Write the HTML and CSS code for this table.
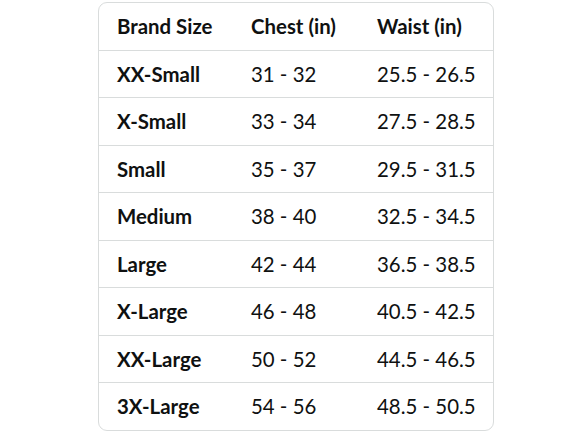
FILE: index.html
```html
<!DOCTYPE html>
<html lang="en">
<head>
<meta charset="utf-8">
<title>Size chart</title>
<link rel="stylesheet" href="styles.css">
</head>
<body>
<div class="page">
  <table class="chart">
    <thead>
      <tr><th>Brand Size</th><th>Chest (in)</th><th>Waist (in)</th></tr>
    </thead>
    <tbody>
      <tr><th>XX-Small</th><td>31 - 32</td><td>25.5 - 26.5</td></tr>
      <tr><th>X-Small</th><td>33 - 34</td><td>27.5 - 28.5</td></tr>
      <tr><th>Small</th><td>35 - 37</td><td>29.5 - 31.5</td></tr>
      <tr><th>Medium</th><td>38 - 40</td><td>32.5 - 34.5</td></tr>
      <tr><th>Large</th><td>42 - 44</td><td>36.5 - 38.5</td></tr>
      <tr><th>X-Large</th><td>46 - 48</td><td>40.5 - 42.5</td></tr>
      <tr><th>XX-Large</th><td>50 - 52</td><td>44.5 - 46.5</td></tr>
      <tr><th>3X-Large</th><td>54 - 56</td><td>48.5 - 50.5</td></tr>
    </tbody>
  </table>
</div>
</body>
</html>
```
FILE: styles.css
```css
html, body {
  margin: 0;
  padding: 0;
  background: #ffffff;
}
.page {
  padding: 2px 0 0 98px;
}
.chart {
  width: 396px;
  border-collapse: separate;
  border-spacing: 0;
  border: 1px solid #d9dcdc;
  border-radius: 9px;
  font-family: Lato, "Liberation Sans", Arial, sans-serif;
  font-size: 20.4px;
  color: #0f1111;
}
.chart th, .chart td {
  height: 47.5px;
  padding: 0 0 0 18px;
  text-align: left;
  vertical-align: middle;
  white-space: nowrap;
  box-sizing: border-box;
}
.chart thead th {
  height: 46.6px;
}
.chart th {
  font-weight: bold;
}
.chart td {
  font-weight: normal;
}
.chart tbody tr th, .chart tbody tr td {
  border-top: 1px solid #d9dcdc;
}
.chart tr > :nth-child(1) { width: 134px; }
.chart tr > :nth-child(2) { width: 126px; }
```
